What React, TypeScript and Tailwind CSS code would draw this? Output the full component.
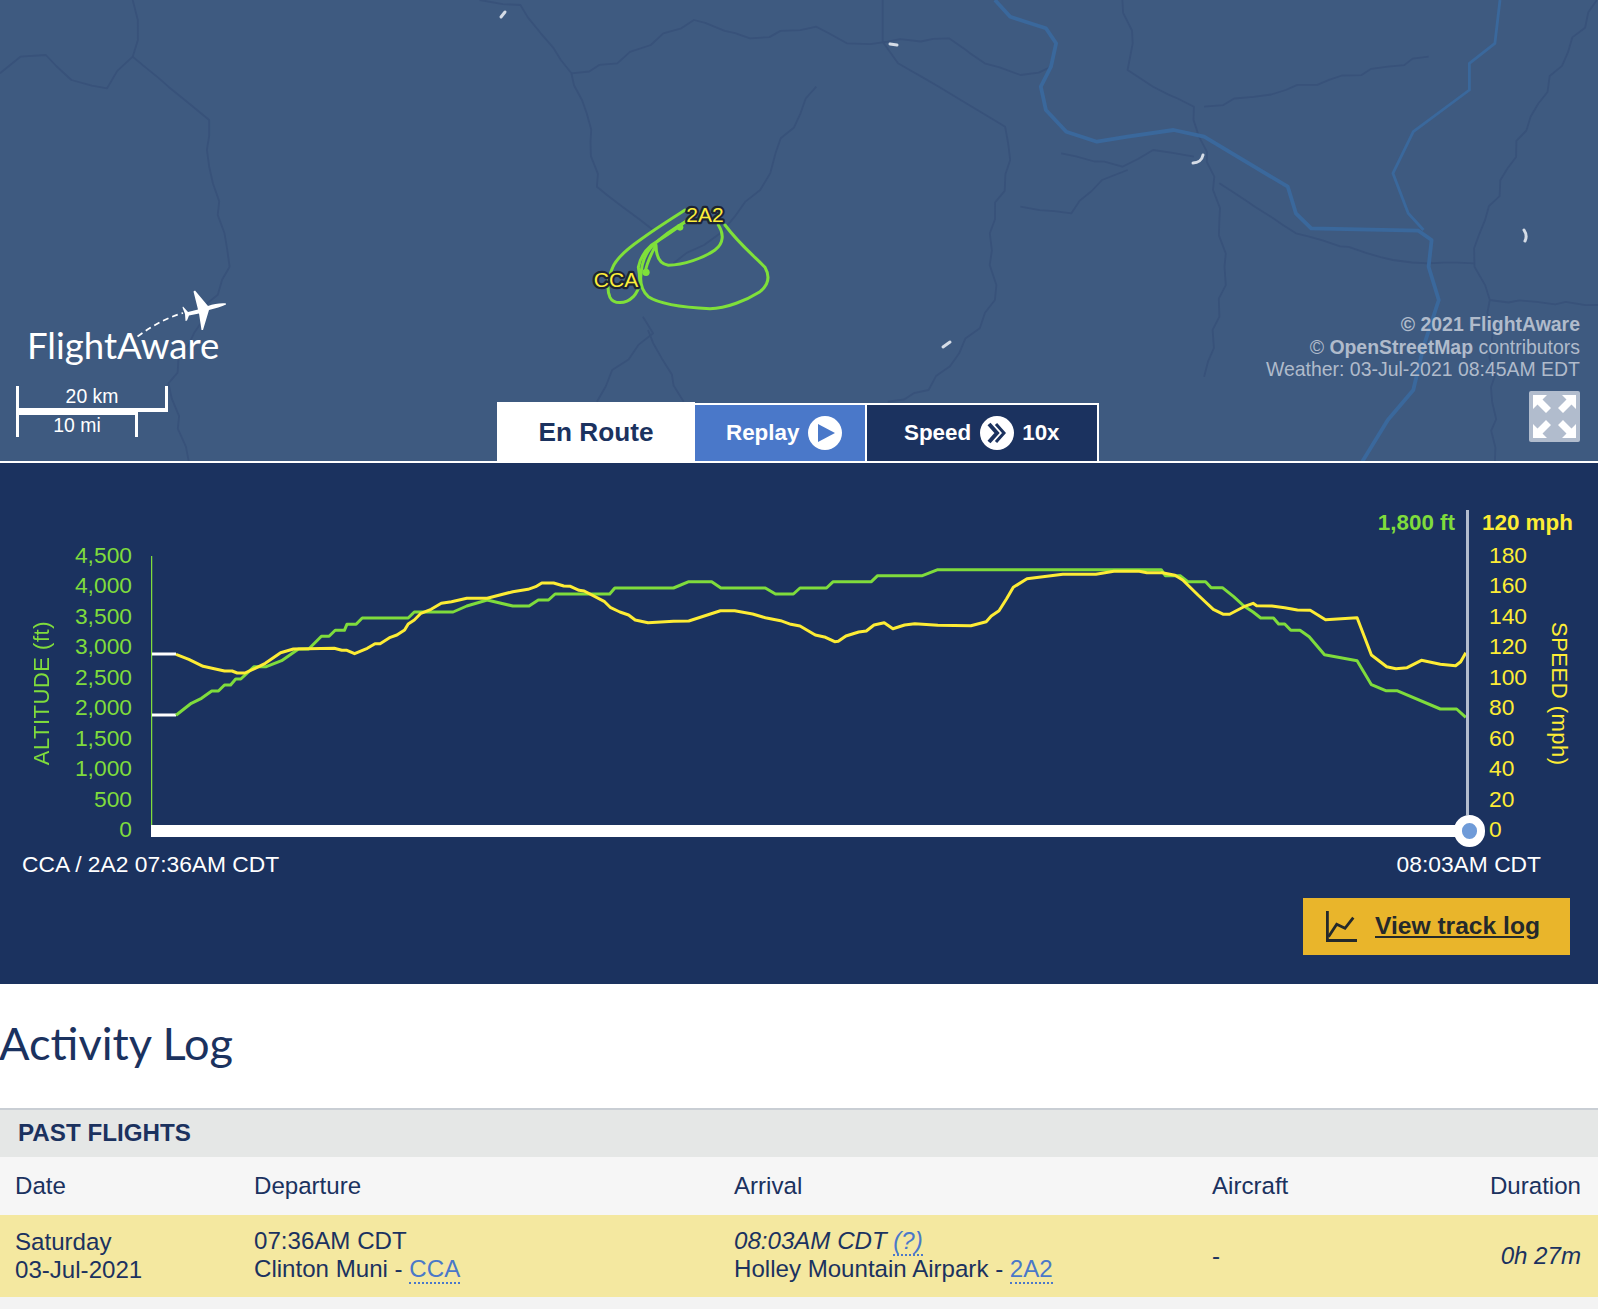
// traced off the reference; map numbers are in crop coords (x / 0.98, y / 3)
const toMap = (pts: number[][]) => pts.map(([x, y]) => [x / 0.98, y / 3]);
const mapPt = (pts: number[][]) => toMap(pts).map(([x, y]) => `${x.toFixed(1)},${y.toFixed(1)}`).join(" ");

// borders are wiggly in the picture, so break long straight runs up a bit
const wiggly = (pts: number[][], seed: number) => {
  const out: string[] = [];
  const m = toMap(pts);
  m.forEach(([x, y], i) => {
    out.push(`${x.toFixed(1)},${y.toFixed(1)}`);
    const next = m[i + 1];
    if (!next) return;
    const steps = Math.floor(Math.hypot(next[0] - x, next[1] - y) / 14);
    for (let s = 1; s < steps; s++) {
      const t = s / steps;
      const n = Math.sin((i + 1) * 3.1 + s * 2.3 + seed) * 3;
      out.push(`${(x + (next[0] - x) * t + n).toFixed(1)},${(y + (next[1] - y) * t + n * 0.6).toFixed(1)}`);
    }
  });
  return out.join(" ");
};

const rivers = [
  [[975, 0], [990, 50], [1005, 65], [1025, 85], [1035, 130], [1030, 200], [1020, 260], [1025, 330], [1045, 395], [1075, 425], [1105, 410], [1150, 390], [1180, 410], [1262, 560], [1270, 640], [1285, 685], [1390, 692], [1403, 720], [1400, 800], [1410, 900], [1395, 1040], [1385, 1170], [1360, 1260], [1335, 1385]],
  [[1470, 0], [1465, 130], [1440, 190], [1440, 270], [1385, 395], [1365, 520], [1380, 640], [1395, 690]],
];

const borders = [
  [[0, 220], [20, 170], [45, 165], [70, 240], [105, 265], [130, 170], [135, 60], [130, 0]],
  [[130, 170], [165, 260], [185, 310], [205, 360], [205, 500], [220, 700], [225, 800], [190, 1000], [165, 1150], [185, 1385]],
  [[470, 0], [510, 15], [530, 100], [560, 220], [575, 340], [585, 560], [610, 620], [640, 690]],
  [[560, 220], [605, 190], [650, 100], [680, 60], [735, 115], [800, 80], [830, 130], [870, 125], [930, 115], [965, 190], [1000, 225], [1030, 200]],
  [[865, 0], [865, 125], [880, 190], [920, 260], [985, 380], [990, 480], [970, 700], [975, 900], [940, 1060], [910, 1170], [870, 1205]],
  [[800, 260], [760, 460], [745, 570], [720, 650], [690, 735], [660, 790]],
  [[1100, 0], [1110, 130], [1105, 210], [1130, 260], [1170, 320], [1175, 410], [1190, 530], [1200, 800], [1195, 950], [1180, 1130]],
  [[1040, 460], [1100, 500], [1130, 450], [1170, 470]],
  [[1000, 620], [1050, 640], [1080, 540], [1105, 510]],
  [[1180, 320], [1260, 270], [1360, 200], [1400, 170]],
  [[630, 950], [640, 1000], [600, 1110], [585, 1205]],
  [[635, 990], [670, 1205]],
  [[1450, 700], [1445, 800], [1460, 900], [1465, 1385]],
  [[1565, 0], [1500, 350], [1450, 700]],
  [[1195, 550], [1270, 700], [1365, 780], [1400, 790], [1445, 790]],
  [[1460, 900], [1568, 915]],
];

const specks = [
  "M501 17 L505 12",
  "M890 44 L897 45",
  "M1193 163 C1198 163 1202 160 1203 155",
  "M1525 241 C1527 237 1526 233 1524 230",
  "M943 347 L950 342",
];

// chart lines in crop coords: left half x / 1.96, right half 800 + x / 1.96, y = 500 + y / 3
const altLeft = [[345, 646], [375, 610], [395, 595], [415, 573], [428, 573], [440, 555], [452, 555], [462, 537], [472, 537], [498, 500], [522, 500], [552, 482], [585, 447], [605, 447], [630, 409], [645, 409], [657, 391], [675, 391], [680, 373], [698, 373], [710, 354], [800, 354], [812, 336], [888, 336], [915, 318], [955, 300], [1005, 318], [1037, 318], [1055, 300], [1075, 300], [1088, 282], [1195, 282], [1205, 264], [1320, 264], [1350, 245], [1395, 245], [1413, 264], [1500, 264], [1520, 282], [1555, 282], [1568, 264]];
const altRight = [[52, 264], [65, 245], [140, 245], [152, 227], [240, 227], [270, 209], [708, 209], [716, 227], [745, 227], [760, 245], [795, 245], [806, 263], [828, 263], [850, 290], [870, 318], [888, 336], [903, 354], [928, 354], [938, 372], [950, 372], [962, 391], [980, 391], [998, 410], [1028, 464], [1092, 482], [1120, 554], [1148, 572], [1170, 572], [1255, 627], [1287, 627], [1305, 652]];
const spdLeft = [[345, 463], [370, 478], [398, 499], [420, 506], [440, 513], [455, 513], [465, 519], [480, 519], [500, 505], [520, 490], [550, 458], [575, 447], [655, 445], [670, 451], [680, 451], [695, 461], [720, 445], [735, 431], [745, 431], [765, 412], [778, 405], [793, 390], [800, 372], [812, 360], [825, 340], [845, 328], [865, 310], [885, 305], [915, 295], [955, 295], [1005, 275], [1035, 268], [1050, 260], [1062, 249], [1085, 249], [1105, 258], [1118, 259], [1135, 271], [1145, 273], [1185, 305], [1197, 323], [1215, 336], [1232, 345], [1245, 360], [1270, 368], [1320, 364], [1350, 363], [1412, 332], [1440, 332], [1475, 342], [1500, 353], [1530, 362], [1550, 373], [1568, 378]];
const spdRight = [[30, 405], [50, 412], [68, 425], [75, 424], [90, 408], [115, 396], [130, 393], [145, 375], [165, 368], [182, 386], [205, 375], [225, 371], [270, 376], [335, 377], [365, 365], [375, 348], [390, 332], [405, 296], [418, 262], [445, 236], [515, 223], [580, 223], [615, 214], [665, 214], [680, 218], [710, 218], [735, 226], [750, 240], [780, 285], [810, 328], [830, 343], [842, 343], [870, 320], [888, 310], [895, 317], [925, 318], [950, 323], [975, 330], [1000, 331], [1030, 359], [1092, 353], [1120, 465], [1150, 500], [1168, 506], [1190, 503], [1218, 481], [1255, 493], [1285, 497], [1295, 485], [1305, 458]];

// plot box starts at 151,510
const plotPt = (left: number[][], right: number[][]) =>
  [...left.map(([x, y]) => [x / 1.96, y / 3]), ...right.map(([x, y]) => [800 + x / 1.96, y / 3])]
    .map(([x, y]) => `${(x - 151).toFixed(1)},${(y - 10).toFixed(1)}`)
    .join(" ");

const altTicks = ["4,500", "4,000", "3,500", "3,000", "2,500", "2,000", "1,500", "1,000", "500", "0"];
const spdTicks = ["180", "160", "140", "120", "100", "80", "60", "40", "20", "0"];

const MapLayer = () => (
  <svg className="absolute inset-0 w-full h-full" viewBox="0 0 1598 461" fill="none" strokeLinejoin="round">
    <g className="blur-[0.6px]">
      {borders.map((b, i) => (
        <polyline key={i} points={wiggly(b, i)} stroke="#38527a" strokeWidth="1.8" />
      ))}
      {rivers.map((r, i) => (
        <polyline key={i} points={mapPt(r)} stroke="#3a689c" strokeWidth={i === 0 ? 3.8 : 2.8} />
      ))}
      {specks.map((d, i) => (
        <path key={i} d={d} stroke="#d5dce6" strokeWidth="3" strokeLinecap="round" />
      ))}
    </g>
    {/* flight track */}
    <g transform="translate(570 190) scale(0.3333)" stroke="#7fe03a" strokeWidth="9" strokeLinecap="round">
      <path d="M345 60 C290 95 250 120 210 150 C170 178 140 205 128 232 C112 265 110 300 120 322 C130 342 165 345 190 320 C212 296 212 270 205 232 C210 205 222 185 245 165 C275 145 310 125 350 92" />
      <path d="M355 90 C310 115 270 145 245 170 C222 195 213 225 212 265 C212 290 218 305 235 320 C265 340 340 352 420 356 C470 356 530 330 570 305 C595 285 602 262 585 232 C560 205 510 165 465 105" />
      <path d="M445 105 C462 130 462 160 435 180 C400 205 340 225 295 226 C270 222 258 200 258 165 C245 190 230 215 225 250" />
      <circle cx="330" cy="112" r="10" fill="#7fe03a" stroke="none" />
      <circle cx="228" cy="247" r="11" fill="#7fe03a" stroke="none" />
    </g>
    <g fontFamily="'Liberation Sans', sans-serif" fontSize="21" fill="#fdee3a" stroke="#1d2433" strokeWidth="4.5" style={{ paintOrder: "stroke" }}>
      <text x="705" y="222" textAnchor="middle">2A2</text>
      <text x="616" y="287" textAnchor="middle">CCA</text>
    </g>
  </svg>
);

const Logo = () => (
  <div className="absolute left-[27px] top-[280px] w-[214px] h-[90px]">
    <svg className="absolute left-[103px] top-0 w-[110px] h-[70px]" viewBox="0 0 110 70" fill="none">
      <path d="M7.5 56.5 C22 46 36 38 53 33" stroke="#fff" strokeWidth="1.7" strokeDasharray="6 4" />
      <path fill="#fff" d="M96 23.5 C90 23 84 24 78 26 L65 10.5 L63.5 11.5 L68 29.5 L58 32 L53 26.5 L52.5 27.5 L55 34 L55.5 41 L57 40.5 L59 35.5 L69 33.5 L71.5 50 L73 50 L79 30 C85 28.5 92 26.5 96 24.5 Z" />
    </svg>
    <span className="absolute left-0 top-[43px] font-['Lato'] text-[36.6px] leading-[44px] text-white">FlightAware</span>
  </div>
);

const ScaleBar = () => (
  <div className="absolute left-[16px] top-[386px] flex flex-col text-white text-[19.4px] leading-none">
    <div className="w-[152px] h-[26px] border-x-[3px] border-b-[4px] border-white flex items-center justify-center">20 km</div>
    <div className="w-[122px] h-[25px] border-x-[3px] border-t-[3px] border-white flex items-center justify-center">10 mi</div>
  </div>
);

const Expand = () => (
  <svg className="absolute left-[1529px] top-[391px] w-[51px] h-[51px]" viewBox="0 0 51 51">
    <rect width="51" height="51" rx="2" fill="#b1bccd" />
    {["", "translate(51 0) scale(-1 1)", "translate(0 51) scale(1 -1)", "translate(51 51) scale(-1 -1)"].map((t, i) => (
      <path key={i} transform={t} fill="#fff" d="M4 4 L18 4 L13.5 8.5 L22 17 L17 22 L8.5 13.5 L4 18 Z" />
    ))}
  </svg>
);

const Tabs = () => (
  <div className="absolute left-[497px] top-[403px] h-[60px] flex font-bold">
    <div className="w-[198px] bg-white flex items-center justify-center text-[26.2px] text-[#1b325f] -mt-[1px]">En Route</div>
    <div className="w-[172px] bg-[#4a78c9] border-t-2 border-b-2 border-r-2 border-white flex items-center pl-[31px] gap-[9px] text-[22.4px] text-white">
      Replay
      <svg className="w-[34px] h-[34px]" viewBox="0 0 34 34">
        <circle cx="17" cy="17" r="17" fill="#fff" />
        <path d="M10 8 L27 17 L10 26 Z" fill="#4a78c9" />
      </svg>
    </div>
    <div className="w-[232px] bg-[#1b325f] border-t-2 border-b-2 border-r-2 border-white flex items-center pl-[37px] text-[22.4px] text-white">
      Speed
      <svg className="w-[34px] h-[34px] ml-[9px] mr-[8px]" viewBox="0 0 34 34" fill="none">
        <circle cx="17" cy="17" r="17" fill="#fff" />
        <path d="M9 8 L17 17 L9 26" stroke="#1b325f" strokeWidth="4" />
        <path d="M16 8 L24 17 L16 26" stroke="#1b325f" strokeWidth="3" />
      </svg>
      10x
    </div>
  </div>
);

const TrackIcon = () => (
  <svg className="w-[32px] h-[31px] shrink-0" viewBox="0 0 32 31" fill="none" stroke="#24292b" strokeWidth="2.8">
    <path d="M1.4 0 V29.5 H31" />
    <path d="M2.5 25.7 L10.7 13.3 L19 17.3 L27.3 6.7" />
  </svg>
);

export default function App() {
  return (
    <div className="w-[1600px] h-[1309px] overflow-hidden bg-white font-['Liberation_Sans',sans-serif] text-[#1b325f]">
      <div className="w-[1598px]">
        <div className="relative h-[463px] bg-[#3e5a80] border-b-2 border-white">
          <MapLayer />
          <Logo />
          <ScaleBar />
          <div className="absolute right-[18px] top-[313px] text-right text-[19.45px] leading-[22.5px] text-[#b0bbcb]">
            <div className="font-bold">© 2021 FlightAware</div>
            <div>© <span className="font-bold">OpenStreetMap</span> contributors</div>
            <div>Weather: 03-Jul-2021 08:45AM EDT</div>
          </div>
          <Expand />
          <Tabs />
        </div>

        <section className="h-[521px] bg-[#1b325f] pt-[47px] text-white">
          <div className="flex h-[338px]">
            <div className="w-[74px] h-[304px] mt-[31px] pl-[8px] flex items-center justify-center shrink-0">
              <span className="[writing-mode:vertical-rl] rotate-180 text-[22px] tracking-[0.5px] whitespace-nowrap text-[#7fdc3c]">ALTITUDE (ft)</span>
            </div>
            <div className="w-[58px] mt-[30px] flex flex-col text-right text-[22.8px] text-[#7fdc3c] shrink-0">
              {altTicks.map((t) => (
                <div key={t} className="h-[30.44px] leading-[30.44px]">{t}</div>
              ))}
            </div>
            <div className="relative w-[1331px] h-[338px] ml-[19px] shrink-0">
              <svg className="absolute inset-0 w-full h-full" viewBox="0 0 1331 338" fill="none" strokeLinejoin="round">
                <path d="M0.5 46 V322" stroke="#7fdc3c" strokeWidth="1.5" />
                <path d="M1 205 H25" stroke="#fff" strokeWidth="3" />
                <path d="M1 144 H25" stroke="#fff" strokeWidth="3" />
                <polyline points={plotPt(altLeft, altRight)} stroke="#7fdc3c" strokeWidth="3" />
                <polyline points={plotPt(spdLeft, spdRight)} stroke="#fdec35" strokeWidth="3" />
              </svg>
              <div className="absolute left-[1315px] top-0 w-[3px] h-[305px] bg-[#b3bccd]" />
              <div className="absolute left-0 top-[315px] w-[1316px] h-[12px] bg-white" />
              <div className="absolute left-[1303px] top-[305px] w-[31px] h-[32px] rounded-full bg-[#6f9bd8] border-[8px] border-white" />
              <div className="absolute right-[27px] top-0 h-[26px] leading-[26px] font-bold text-[22.4px] text-[#7fdc3c]">1,800 ft</div>
            </div>
            <div className="w-[116px] flex flex-col text-[#fdec35] shrink-0">
              <div className="h-[26px] leading-[26px] font-bold text-[22.4px]">120 mph</div>
              <div className="flex mt-[4px]">
                <div className="w-[60px] pl-[7px] text-[22.8px]">
                  {spdTicks.map((t) => (
                    <div key={t} className="h-[30.44px] leading-[30.44px]">{t}</div>
                  ))}
                </div>
                <div className="w-[34px] h-[304px] pt-[4px] flex items-center justify-center">
                  <span className="[writing-mode:vertical-rl] text-[22px] tracking-[0.5px] whitespace-nowrap">SPEED (mph)</span>
                </div>
              </div>
            </div>
          </div>
          <div className="flex justify-between h-[32px] leading-[32px] text-[22.8px] pl-[22px] pr-[57px]">
            <span>CCA / 2A2 07:36AM CDT</span>
            <span>08:03AM CDT</span>
          </div>
          <div className="flex justify-end pr-[28px] mt-[18px]">
            <a href="#" className="w-[267px] h-[57px] bg-[#e9b52b] flex items-center pl-[23px] gap-[17px] text-[24.6px] font-bold text-[#24292b]">
              <TrackIcon />
              <span className="underline">View track log</span>
            </a>
          </div>
        </section>

        <div className="h-[124px] flex items-center pb-[6px]">
          <h1 className="font-['Lato'] text-[45.2px] leading-[54px] -ml-[1px]">Activity Log</h1>
        </div>

        <div className="h-[49px] bg-[#e5e7e6] border-t-2 border-[#c9ced4] flex items-center pl-[18px] text-[24.2px] font-bold">PAST FLIGHTS</div>

        <div className="grid grid-cols-[254px_480px_478px_184px_1fr] h-[58px] items-center bg-[#f6f6f6] text-[24.1px]">
          <div className="pl-[15px]">Date</div>
          <div>Departure</div>
          <div>Arrival</div>
          <div>Aircraft</div>
          <div className="text-right pr-[17px]">Duration</div>
        </div>

        <div className="grid grid-cols-[254px_480px_478px_184px_1fr] h-[82px] items-center bg-[#f4e8a0] text-[24.1px] leading-[28px]">
          <div className="pl-[15px]">
            <div>Saturday</div>
            <div>03-Jul-2021</div>
          </div>
          <div className="pb-[2px]">
            <div>07:36AM CDT</div>
            <div>Clinton Muni - <a href="#" className="text-[#4a78c9] border-b-2 border-dotted border-[#4a78c9]">CCA</a></div>
          </div>
          <div className="pb-[2px]">
            <div className="italic">08:03AM CDT <a href="#" className="text-[#4a78c9] border-b-2 border-dotted border-[#4a78c9]">(?)</a></div>
            <div>Holley Mountain Airpark - <a href="#" className="text-[#4a78c9] border-b-2 border-dotted border-[#4a78c9]">2A2</a></div>
          </div>
          <div>-</div>
          <div className="text-right pr-[17px] italic">0h 27m</div>
        </div>

        <div className="h-[12px] bg-[#f3f3f3]" />
      </div>
    </div>
  );
}
